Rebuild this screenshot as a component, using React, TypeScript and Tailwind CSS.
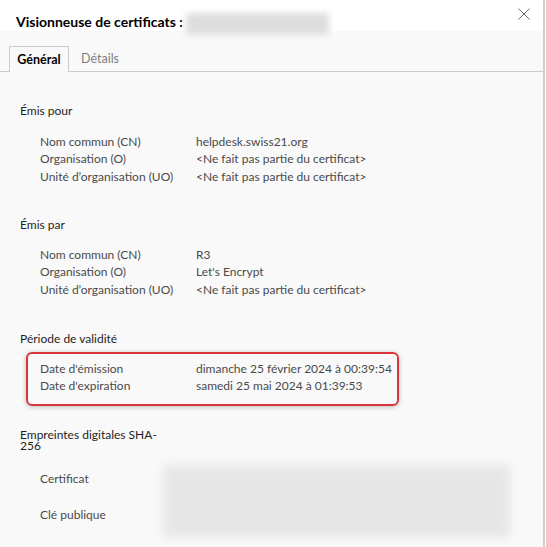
import React from "react";

const font = { fontFamily: 'Lato, "Noto Sans", sans-serif' };

function Row({ label, value }: { label: string; value: string }) {
  return (
    <div className="flex h-[17.5px] items-center whitespace-nowrap text-[12px] text-[#4a4a4a]">
      <div className="w-[176px] shrink-0 pl-[20px]">{label}</div>
      <div>{value}</div>
    </div>
  );
}

export default function App() {
  return (
    <div className="flex h-[547px] w-[546px] bg-white" style={font}>
      <div className="flex h-full w-[545px] flex-col border-r-2 border-[#cfcfcf] bg-[#f9f9f9]">
        {/* header */}
        <div className="relative flex h-[31px] shrink-0 items-start bg-white pl-[16px] pt-[14px]">
          <span className="text-[14px] font-bold leading-[16px] text-black">Visionneuse de certificats :</span>
          <span className="ml-[3px] mt-[-1px] h-[22px] w-[143px] rounded-[3px] bg-[#dedede] blur-[3px]" />
          <svg className="absolute right-[13px] top-[8px]" width="12" height="12" viewBox="0 0 12 12">
            <path d="M0.5 0.5 L11.5 11.5 M11.5 0.5 L0.5 11.5" stroke="#6b6b6b" strokeWidth="1" fill="none" />
          </svg>
        </div>
        {/* tabs */}
        <div className="mt-[15px] flex h-[26px] shrink-0 items-end border-b border-[#cccccc] pl-[9px]">
          <div className="mb-[-1px] flex h-[26px] w-[60px] items-center justify-center border border-b-0 border-[#cccccc] bg-[#f9f9f9] pt-[2px] text-[12.5px] font-bold text-black">
            Général
          </div>
          <div className="flex h-[25px] items-center pl-[12px] pt-[2px] text-[12.5px] text-[#7f7f7f]">Détails</div>
        </div>
        {/* content */}
        <div className="flex flex-col pl-[20px]">
          <div className="mt-[30px] h-[18px] text-[12px] leading-[18px] text-[#1f1f1f]">Émis pour</div>
          <div className="mt-[13px]">
            <Row label="Nom commun (CN)" value="helpdesk.swiss21.org" />
            <Row label="Organisation (O)" value="<Ne fait pas partie du certificat>" />
            <Row label="Unité d’organisation (UO)" value="<Ne fait pas partie du certificat>" />
          </div>
          <div className="mt-[30.5px] h-[18px] text-[12px] leading-[18px] text-[#1f1f1f]">Émis par</div>
          <div className="mt-[12px]">
            <Row label="Nom commun (CN)" value="R3" />
            <Row label="Organisation (O)" value="Let's Encrypt" />
            <Row label="Unité d’organisation (UO)" value="<Ne fait pas partie du certificat>" />
          </div>
          <div className="mt-[31.5px] h-[18px] text-[12px] leading-[18px] text-[#1f1f1f]">Période de validité</div>
          <div className="ml-[6px] mt-[4px] w-[373px] rounded-[6px] border-2 border-[#d9353c] pb-[9px] pt-[6px] shadow-[0_1px_5px_rgba(0,0,0,0.25)]">
            <div className="-ml-[8px]">
              <Row label="Date d'émission" value="dimanche 25 février 2024 à 00:39:54" />
              <Row label="Date d'expiration" value="samedi 25 mai 2024 à 01:39:53" />
            </div>
          </div>
          <div className="mt-[23px] w-[150px] text-[12px] leading-[11px] text-[#1f1f1f]">Empreintes digitales SHA-256</div>
          <div className="mt-[14px] flex">
            <div className="flex w-[143px] shrink-0 flex-col pl-[20px] text-[12px] text-[#4a4a4a]">
              <div className="mt-[5px] h-[18px] leading-[18px]">Certificat</div>
              <div className="mt-[18px] h-[18px] leading-[18px]">Clé publique</div>
            </div>
            <div className="h-[72px] w-[347px] rounded-[4px] bg-[#e6e6e6] blur-[5px]" />
          </div>
        </div>
      </div>
    </div>
  );
}
